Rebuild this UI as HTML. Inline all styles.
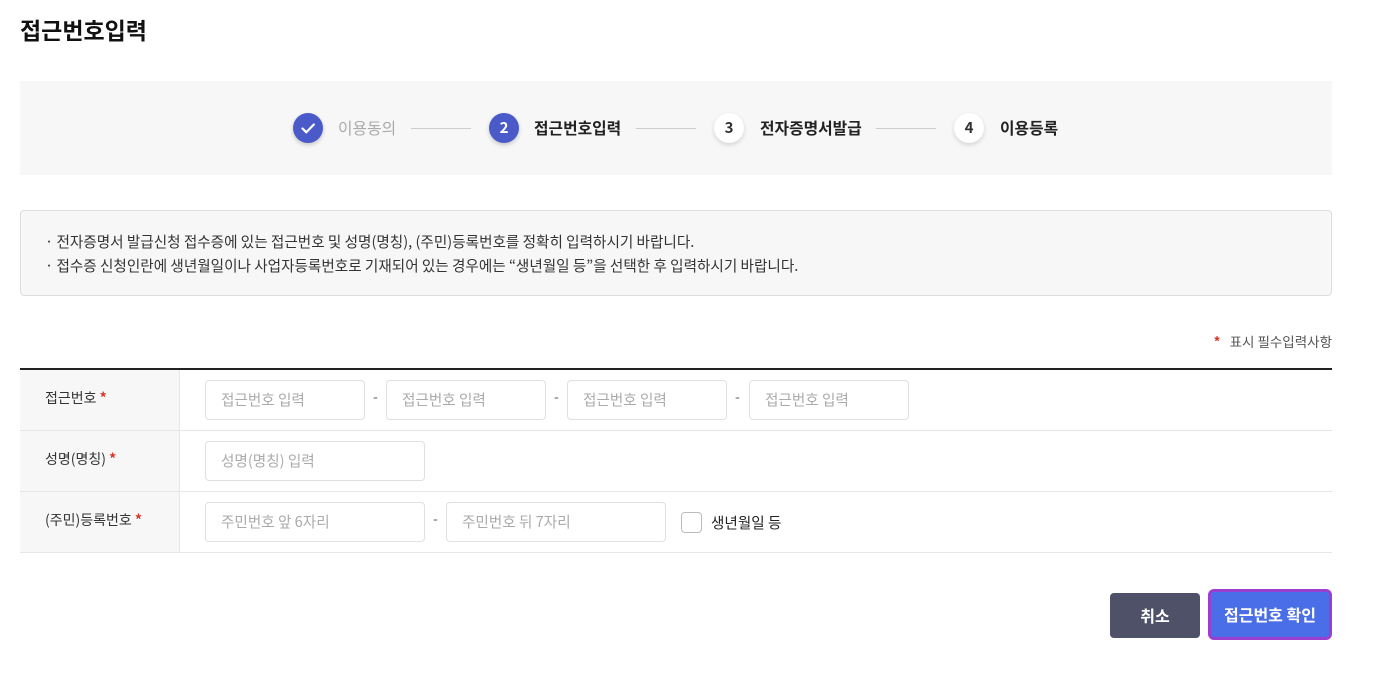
<!DOCTYPE html>
<html><head><meta charset="utf-8"><style>
*{box-sizing:border-box;margin:0;padding:0}
body{width:1384px;height:678px;background:#fff;font-family:"Noto Sans CJK KR","Liberation Sans",sans-serif;color:#222;position:relative;overflow:hidden}
.a{position:absolute}
h1{position:absolute;left:20px;top:13px;font-size:23px;font-weight:700;color:#111;line-height:32px}
.step{position:absolute;left:20px;top:81px;width:1312px;height:94px;background:#f7f7f7}
.c{position:absolute;top:32px;width:30px;height:30px;border-radius:50%;font-size:15px;font-weight:700;text-align:center;line-height:30px}
.c.on{background:#4a5ac9;color:#fff;box-shadow:0 2px 4px rgba(0,0,0,.2)}
.c.off{background:#fff;color:#333;box-shadow:0 2px 5px rgba(0,0,0,.15)}
.t{position:absolute;top:36px;font-size:15.8px;font-weight:700;color:#222;line-height:22px}
.ln{position:absolute;top:47px;width:60px;height:1px;background:#ccc}
.note{position:absolute;left:20px;top:210px;width:1312px;height:86px;border:1px solid #ddd;border-radius:4px;background:#f7f7f7;font-size:14.6px;color:#333;padding:19px 0 0 24px;line-height:24px}
.req{position:absolute;width:200px;text-align:right;left:1132px;top:331px;font-size:13.5px;color:#555;line-height:20px}
.star{color:#d32;font-weight:700}
.tbl{position:absolute;left:20px;top:368px;width:1312px;border-top:2px solid #222}
.row{height:61px;border-bottom:1px solid #e6e6e6;position:relative}
.lab{position:absolute;left:0;top:0;width:160px;height:60px;background:#f7f7f7;border-right:1px solid #e6e6e6;font-size:14px;color:#333;padding-left:25px;line-height:56px}
.in{position:absolute;top:10px;height:40px;border:1px solid #e0e0e0;border-radius:4px;font-size:14.6px;color:#aaa;padding-left:15px;line-height:38px;background:#fff}
.d{position:absolute;top:17px;font-size:14px;color:#555}
.btn{position:absolute;font-size:16px;font-weight:700;color:#fff;text-align:center;border-radius:4px}
</style></head><body>
<h1>접근번호입력</h1>
<div class="step">
<div class="c on" style="left:273px"><svg width="30" height="30" viewBox="0 0 30 30"><path d="M9.5 15.5l3.8 3.8 7.5-7.8" fill="none" stroke="#fff" stroke-width="2.2" stroke-linecap="round" stroke-linejoin="round"/></svg></div>
<div class="t" style="left:318px;color:#aaa;font-weight:400">이용동의</div>
<div class="ln" style="left:391px"></div>
<div class="c on" style="left:469px">2</div>
<div class="t" style="left:514px">접근번호입력</div>
<div class="ln" style="left:616px"></div>
<div class="c off" style="left:694px">3</div>
<div class="t" style="left:740px">전자증명서발급</div>
<div class="ln" style="left:856px"></div>
<div class="c off" style="left:934px">4</div>
<div class="t" style="left:980px">이용등록</div>
</div>
<div class="note">· 전자증명서 발급신청 접수증에 있는 접근번호 및 성명(명칭), (주민)등록번호를 정확히 입력하시기 바랍니다.<br>· 접수증 신청인란에 생년월일이나 사업자등록번호로 기재되어 있는 경우에는 “생년월일 등”을 선택한 후 입력하시기 바랍니다.</div>
<div class="req"><span class="star">*</span>&nbsp;&nbsp; 표시 필수입력사항</div>
<div class="tbl">
<div class="row"><div class="lab">접근번호 <span class="star">*</span></div>
<div class="in" style="left:185px;width:160px">접근번호 입력</div><div class="d" style="left:353px">-</div>
<div class="in" style="left:366px;width:160px">접근번호 입력</div><div class="d" style="left:534px">-</div>
<div class="in" style="left:547px;width:160px">접근번호 입력</div><div class="d" style="left:715px">-</div>
<div class="in" style="left:729px;width:160px">접근번호 입력</div></div>
<div class="row"><div class="lab">성명(명칭) <span class="star">*</span></div>
<div class="in" style="left:185px;width:220px">성명(명칭) 입력</div></div>
<div class="row"><div class="lab">(주민)등록번호 <span class="star">*</span></div>
<div class="in" style="left:185px;width:220px">주민번호 앞 6자리</div><div class="d" style="left:413px">-</div>
<div class="in" style="left:426px;width:220px">주민번호 뒤 7자리</div>
<div class="a" style="left:661px;top:20px;width:21px;height:21px;border:1px solid #bbb;border-radius:4px;background:#fff"></div>
<div class="a" style="left:691px;top:20px;font-size:14.6px;color:#222">생년월일 등</div></div>
</div>
<div class="btn" style="left:1110px;top:593px;width:90px;height:45px;background:#4e5168;line-height:45px">취소</div>
<div class="btn" style="left:1208px;top:589px;width:124px;height:51px;background:#4a6ee8;border:3px solid #9b3fd0;border-radius:6px;line-height:45px">접근번호 확인</div>
</body></html>
